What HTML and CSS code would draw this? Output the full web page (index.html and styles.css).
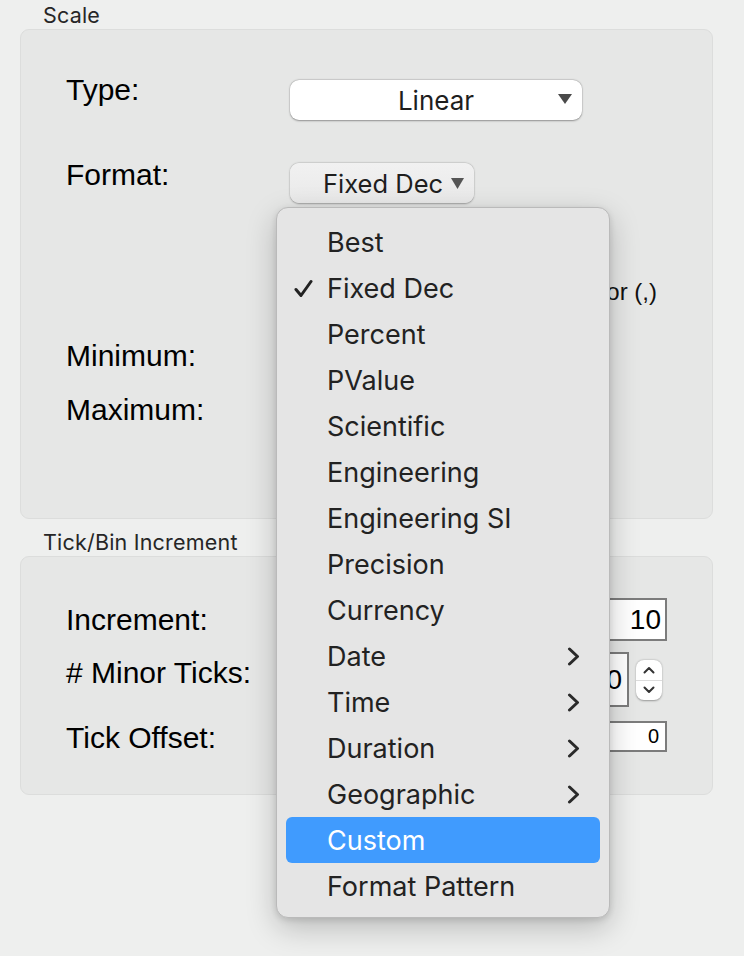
FILE: index.html
```html
<!DOCTYPE html>
<html>
<head>
<meta charset="utf-8">
<link rel="stylesheet" href="styles.css">
</head>
<body>
<div class="panel">
  <div class="group-title">Scale</div>
  <div class="group scale">
    <div class="row row-type">
      <div class="label">Type:</div>
      <div class="select">
        <span class="select-text">Linear</span>
        <svg class="tri" width="14" height="10" viewBox="0 0 14 10"><polygon points="0,0 14,0 7,10" fill="#4a4a4a"/></svg>
      </div>
    </div>
    <div class="row row-format">
      <div class="label">Format:</div>
      <div class="popbtn">
        <span>Fixed Dec</span>
        <svg class="tri" width="13" height="11" viewBox="0 0 13 11"><polygon points="0,0 13,0 6.5,11" fill="#555"/></svg>
      </div>
    </div>
    <div class="row row-sep">
      <div class="sep-clip"><div class="check"><span class="cbox"></span>Use thousands separator (,)</div></div>
    </div>
    <div class="row row-min">
      <div class="label">Minimum:</div>
      <div class="field hidden-field"></div>
    </div>
    <div class="row row-max">
      <div class="label">Maximum:</div>
      <div class="field hidden-field"></div>
    </div>
  </div>

  <div class="group-title second">Tick/Bin Increment</div>
  <div class="group tick">
    <div class="row row-inc">
      <div class="label lbl-inc">Increment:</div>
      <div class="field inc-field">10</div>
    </div>
    <div class="row row-minor">
      <div class="label lbl-minor">#&nbsp;Minor Ticks:</div>
      <div class="field minor-field">0</div>
      <div class="stepper">
        <div class="step up"><svg width="12" height="8" viewBox="0 0 12 8"><polyline points="1.5,6.5 6,2 10.5,6.5" fill="none" stroke="#333" stroke-width="2" stroke-linecap="round" stroke-linejoin="round"/></svg></div>
        <div class="step down"><svg width="12" height="8" viewBox="0 0 12 8"><polyline points="1.5,1.5 6,6 10.5,1.5" fill="none" stroke="#333" stroke-width="2" stroke-linecap="round" stroke-linejoin="round"/></svg></div>
      </div>
    </div>
    <div class="row row-offset">
      <div class="label lbl-offset">Tick Offset:</div>
      <div class="field offset-field">0</div>
    </div>
  </div>
</div>

<div class="menu">
  <div class="item"><span class="gutter"></span>Best</div>
  <div class="item"><span class="gutter"><svg width="19" height="19" viewBox="0 0 19 19"><polyline points="2,10.5 7,16.5 17,2.5" fill="none" stroke="#222" stroke-width="3" stroke-linecap="round" stroke-linejoin="round"/></svg></span>Fixed Dec</div>
  <div class="item"><span class="gutter"></span>Percent</div>
  <div class="item"><span class="gutter"></span>PValue</div>
  <div class="item"><span class="gutter"></span>Scientific</div>
  <div class="item"><span class="gutter"></span>Engineering</div>
  <div class="item"><span class="gutter"></span>Engineering SI</div>
  <div class="item"><span class="gutter"></span>Precision</div>
  <div class="item"><span class="gutter"></span>Currency</div>
  <div class="item"><span class="gutter"></span>Date<svg class="chev" width="13" height="19" viewBox="0 0 13 19"><polyline points="2.5,2 10.5,9.5 2.5,17" fill="none" stroke="#2a2a2a" stroke-width="3" stroke-linecap="round" stroke-linejoin="round"/></svg></div>
  <div class="item"><span class="gutter"></span>Time<svg class="chev" width="13" height="19" viewBox="0 0 13 19"><polyline points="2.5,2 10.5,9.5 2.5,17" fill="none" stroke="#2a2a2a" stroke-width="3" stroke-linecap="round" stroke-linejoin="round"/></svg></div>
  <div class="item"><span class="gutter"></span>Duration<svg class="chev" width="13" height="19" viewBox="0 0 13 19"><polyline points="2.5,2 10.5,9.5 2.5,17" fill="none" stroke="#2a2a2a" stroke-width="3" stroke-linecap="round" stroke-linejoin="round"/></svg></div>
  <div class="item"><span class="gutter"></span>Geographic<svg class="chev" width="13" height="19" viewBox="0 0 13 19"><polyline points="2.5,2 10.5,9.5 2.5,17" fill="none" stroke="#2a2a2a" stroke-width="3" stroke-linecap="round" stroke-linejoin="round"/></svg></div>
  <div class="item hl"><span class="gutter"></span>Custom</div>
  <div class="item"><span class="gutter"></span>Format Pattern</div>
</div>
</body>
</html>
```

FILE: styles.css
```css
html, body {
  margin: 0;
  padding: 0;
}
body {
  width: 744px;
  height: 956px;
  overflow: hidden;
  background: #eeefee;
  font-family: "Liberation Sans", Arial, sans-serif;
  position: relative;
}
.panel {
  padding: 3px 31px 0 20px;
}
.group-title {
  font-family: Inter, "Noto Sans", sans-serif;
  font-size: 21.5px;
  letter-spacing: 0.2px;
  line-height: 24px;
  color: #262626;
  padding-left: 23px;
}
.group-title.second {
  margin-top: 11px;
}
.group {
  box-sizing: border-box;
  background: #e6e7e6;
  border: 1px solid #dcdddc;
  border-radius: 9px;
  padding: 0 45px;
  margin-top: 2px;
}
.scale {
  height: 490px;
  padding-top: 43px;
}
.tick {
  height: 239px;
  padding-top: 41px;
}
.row {
  display: flex;
  align-items: flex-start;
}
.label {
  flex: none;
  width: 224px;
  font-size: 30px;
  line-height: 34px;
  color: #000;
  white-space: nowrap;
}
.row-type { height: 85px; }
.row-format { height: 106px; }
.row-sep { height: 75px; justify-content: flex-end; }
.row-min { height: 54px; }
.row-inc { height: 54px; }
.row-minor { height: 68px; }
.lbl-inc { margin-top: 5px; }
.lbl-minor { margin-top: 4px; }
.lbl-offset { margin-top: 1px; }

.select {
  margin-top: 7px;
  box-sizing: border-box;
  width: 292px;
  height: 40px;
  background: #fff;
  border-radius: 9px;
  box-shadow: 0 0.5px 2px rgba(0,0,0,0.35), 0 0 0 0.5px rgba(0,0,0,0.08);
  display: flex;
  align-items: center;
  justify-content: center;
  position: relative;
  font-family: Inter, "Noto Sans", sans-serif;
  font-size: 26px;
  color: #1e1e1e;
}
.select .tri {
  position: absolute;
  right: 10px;
  top: 14px;
}
.popbtn {
  margin-top: 5px;
  box-sizing: border-box;
  width: 184px;
  height: 40px;
  background: linear-gradient(#f1f1f1, #e9e9e9);
  border-radius: 9px;
  box-shadow: 0 0.5px 2px rgba(0,0,0,0.3), 0 0 0 0.5px rgba(0,0,0,0.06);
  display: flex;
  align-items: center;
  padding-left: 33px;
  font-family: Inter, "Noto Sans", sans-serif;
  font-size: 25.5px;
  color: #1e1e1e;
}
.popbtn .tri {
  margin-left: 8px;
  margin-top: 1px;
}
.sep-clip {
  margin-top: 13px;
  margin-right: 10px;
  width: 52px;
  overflow: hidden;
  display: flex;
  justify-content: flex-end;
}
.check {
  flex: none;
  font-size: 24px;
  line-height: 30px;
  color: #111;
  display: flex;
  align-items: center;
  white-space: nowrap;
}
.cbox {
  width: 20px;
  height: 20px;
  border-radius: 5px;
  background: #fff;
  box-shadow: 0 0.5px 2px rgba(0,0,0,0.3);
  margin-right: 10px;
}
.field {
  box-sizing: border-box;
  background: #fff;
  border: 2px solid #7c7c7c;
  color: #000;
  text-align: right;
}
.hidden-field {
  width: 290px;
  height: 40px;
}
.inc-field {
  margin-left: auto;
  width: 160px;
  height: 43px;
  font-size: 28px;
  line-height: 39px;
  padding-right: 4px;
}
.minor-field {
  margin-left: auto;
  width: 120px;
  height: 55px;
  font-size: 28px;
  line-height: 51px;
  padding-right: 5px;
}
.stepper {
  margin-top: 8px;
  margin-left: 7px;
  margin-right: 5px;
  width: 26px;
  height: 40px;
  background: #fff;
  border-radius: 8px;
  box-shadow: 0 0.5px 2px rgba(0,0,0,0.35);
  display: flex;
  flex-direction: column;
}
.step {
  flex: 1;
  display: flex;
  align-items: center;
  justify-content: center;
}
.step.up {
  border-bottom: 1px solid #dcdcdc;
}
.offset-field {
  margin-left: auto;
  margin-top: 1px;
  width: 160px;
  height: 31px;
  font-size: 20px;
  line-height: 27px;
  padding-right: 6px;
}

.menu {
  position: absolute;
  left: 276px;
  top: 207px;
  width: 334px;
  height: 711px;
  box-sizing: border-box;
  background: #e5e5e5;
  border: 1px solid #bababa;
  border-radius: 12px;
  box-shadow: 0 10px 30px rgba(0,0,0,0.22), 0 2px 6px rgba(0,0,0,0.12);
  padding: 11px 9px 8px 9px;
  font-family: Inter, "Noto Sans", sans-serif;
  font-size: 27px;
  font-weight: 400;
  color: #222;
}
.item {
  height: 46px;
  display: flex;
  align-items: center;
  border-radius: 6px;
}
.item.hl {
  background: #409bfe;
  color: #fff;
}
.gutter {
  flex: none;
  width: 41px;
  box-sizing: border-box;
  padding-left: 8px;
  display: flex;
  align-items: center;
}
.chev {
  margin-left: auto;
  margin-right: 20px;
}
```
